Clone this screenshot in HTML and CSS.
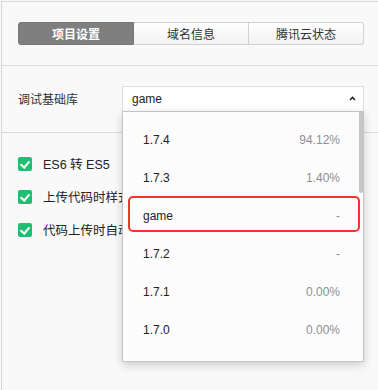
FILE: index.html
```html
<!DOCTYPE html>
<html lang="zh-CN">
<head>
    <meta charset="UTF-8">
    <title>项目设置</title>
    <link rel="stylesheet" href="styles.css">
</head>
<body>
    <div class="panel">
        <div class="tabs">
            <div class="tab active">项目设置</div>
            <div class="tab">域名信息</div>
            <div class="tab">腾讯云状态</div>
        </div>

        <div class="row">
            <label class="label">调试基础库</label>
            <div class="select-wrap">
                <div class="select">
                    <span>game</span>
                    <svg class="caret" width="7" height="5" viewBox="0 0 7 5">
                        <polyline points="1,4 3.5,1.5 6,4" fill="none" stroke="#222" stroke-width="1.6"/>
                    </svg>
                </div>
                <div class="dropdown">
                    <div class="scrollbar"></div>
                    <div class="option"><span>1.7.4</span><span class="pct">94.12%</span></div>
                    <div class="option"><span>1.7.3</span><span class="pct">1.40%</span></div>
                    <div class="option marked"><span>game</span><span class="pct">-</span></div>
                    <div class="option"><span>1.7.2</span><span class="pct">-</span></div>
                    <div class="option"><span>1.7.1</span><span class="pct">0.00%</span></div>
                    <div class="option"><span>1.7.0</span><span class="pct">0.00%</span></div>
                    <div class="option"><span>1.6.9</span><span class="pct">-</span></div>
                </div>
            </div>
        </div>

        <div class="checks">
            <div class="check"><span class="box"></span>ES6 转 ES5</div>
            <div class="check"><span class="box"></span>上传代码时样式自动补全</div>
            <div class="check"><span class="box"></span>代码上传时自动压缩</div>
        </div>
    </div>
</body>
</html>
```

FILE: styles.css
```css
* {
    box-sizing: border-box;
}
body {
    margin: 0;
    background: #f9f9f9;
    font-family: "Liberation Sans", "Noto Sans CJK SC", sans-serif;
    font-size: 12px;
    color: #333;
}
.panel {
    margin: 1px 0 0 1px;
    height: 389px;
    border-top: 1px solid #d6d6d6;
    border-left: 1px solid #d6d6d6;
    background: #f9f9f9;
}
.tabs {
    display: flex;
    padding: 20px 14px 20px 16px;
    border-bottom: 1px solid #dcdcdc;
}
.tab {
    flex: 1;
    height: 23px;
    display: flex;
    align-items: center;
    justify-content: center;
    background: linear-gradient(#ffffff, #f2f2f2);
    border: 1px solid #d2d2d2;
    border-left: none;
    color: #333;
}
.tab:last-child {
    border-radius: 0 3px 3px 0;
}
.tab.active {
    background: #7f7f7f;
    border: 1px solid #777;
    border-radius: 3px 0 0 3px;
    color: #fff;
    font-weight: bold;
}
.row {
    display: flex;
    align-items: center;
    padding: 20px 14px 21px 16px;
    border-bottom: 1px solid #d9d9d9;
}
.label {
    width: 104px;
    color: #333;
}
.select-wrap {
    position: relative;
    flex: 1;
}
.select {
    height: 25px;
    display: flex;
    align-items: center;
    justify-content: space-between;
    padding: 0 7px 0 9px;
    background: #fff;
    border: 1px solid #dedede;
    border-bottom: none;
    font-size: 12px;
    color: #222;
}
.caret {
    margin-top: -2px;
}
.dropdown {
    position: absolute;
    top: 25px;
    left: 0;
    right: 0;
    height: 251px;
    overflow: hidden;
    padding-top: 9px;
    background: #fcfcfc;
    border: 1px solid #c4c4c4;
    box-shadow: 0 3px 9px rgba(0, 0, 0, 0.18);
    z-index: 2;
}
.scrollbar {
    position: absolute;
    top: 0;
    right: 0;
    width: 4px;
    height: 81px;
    background: #c6c6c6;
    border-radius: 0 0 2px 2px;
}
.option {
    position: relative;
    height: 38px;
    display: flex;
    align-items: center;
    justify-content: space-between;
    padding: 0 23px 0 20px;
    color: #222;
}
.pct {
    color: #8f8f8f;
}
.marked::after {
    content: "";
    position: absolute;
    top: -1px;
    bottom: 3px;
    left: 5px;
    right: 3px;
    border: 2px solid #f2372a;
    border-radius: 5px;
}
.checks {
    padding: 14px 16px;
}
.check {
    height: 33px;
    display: flex;
    align-items: center;
    gap: 11px;
    font-size: 12.5px;
    color: #222;
    white-space: nowrap;
}
.box {
    position: relative;
    width: 14px;
    height: 14px;
    border-radius: 2px;
    background: #1dbf73;
}
.box::after {
    content: "";
    position: absolute;
    left: 4px;
    top: 2px;
    width: 4px;
    height: 7px;
    border-right: 2px solid #fff;
    border-bottom: 2px solid #fff;
    transform: rotate(40deg);
}
```
